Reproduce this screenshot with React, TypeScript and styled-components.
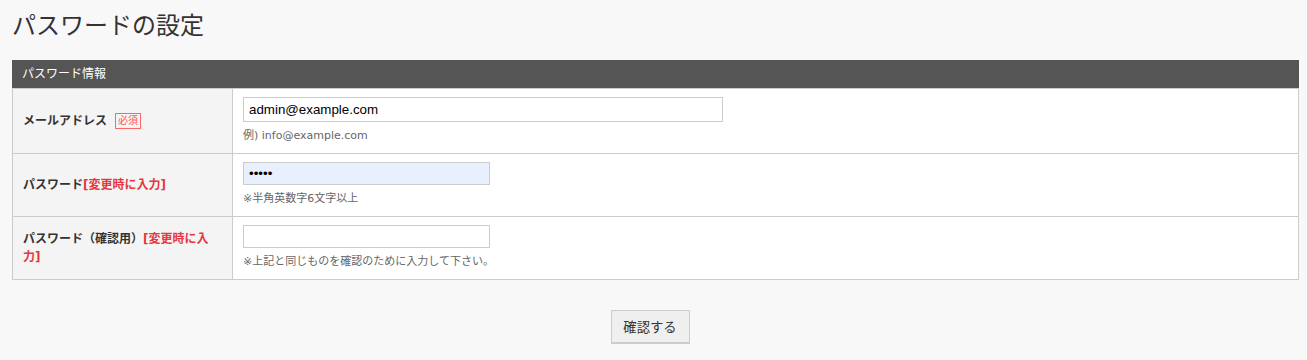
import styled, { createGlobalStyle } from "styled-components"

const GlobalStyle = createGlobalStyle`
  html, body {
    margin: 0;
    padding: 0;
    background: #f8f8f8;
    font-family: "DejaVu Sans", "Noto Sans CJK JP", sans-serif;
    color: #333;
  }
`

const Page = styled.div`
  padding: 0 8px 0 12px;
`

const Title = styled.h1`
  margin: 7px 0 19px;
  font-family: "Noto Sans CJK JP", sans-serif;
  font-size: 24px;
  line-height: 34px;
  font-weight: 400;
  color: #333;
`

const SectionHead = styled.div`
  height: 28px;
  line-height: 28px;
  background: #555;
  color: #fff;
  font-size: 12px;
  padding: 0 10px;
`

const FormBox = styled.div`
  border: 1px solid #ccc;
  background: #fff;
`

const Row = styled.div`
  display: grid;
  grid-template-columns: 220px 1fr;
  & + & {
    border-top: 1px solid #ccc;
  }
`

const Label = styled.div`
  display: flex;
  align-items: center;
  background: #f4f4f4;
  border-right: 1px solid #ccc;
  padding: 0 14px 0 10px;
  font-size: 12px;
  line-height: 18px;
  font-weight: 700;
  color: #333;
`

const LabelText = styled.span``

const Note = styled.span`
  color: #e8383d;
`

const Required = styled.span`
  display: inline-block;
  margin-left: 8px;
  padding: 0 2px;
  height: 14px;
  line-height: 14px;
  border: 1px solid #f66;
  color: #f55;
  font-size: 10px;
  font-weight: 400;
`

const Value = styled.div`
  padding: 8px 10px;
`

const Field = styled.input<{ $w: number; $h: number; $filled?: boolean }>`
  display: block;
  box-sizing: border-box;
  width: ${(p) => p.$w}px;
  height: ${(p) => p.$h}px;
  margin: 0;
  padding: 0 5px;
  border: 1px solid #ccc;
  border-radius: 0;
  background: ${(p) => (p.$filled ? "#e8f0fe" : "#fff")};
  font-family: "Liberation Sans", "Noto Sans CJK JP", sans-serif;
  font-size: 13.333px;
  color: #000;
  outline: none;
`

const Hint = styled.div`
  margin-top: 5px;
  font-size: 11px;
  line-height: 18px;
  color: #666;
`

const ButtonRow = styled.div`
  display: flex;
  justify-content: center;
  padding: 30px 11px 0 0;
`

const Button = styled.button`
  box-sizing: border-box;
  width: 79px;
  height: 34px;
  padding: 0;
  background: #efefef;
  border: 1px solid #ccc;
  border-bottom-width: 2px;
  font-family: "Noto Sans CJK JP", sans-serif;
  font-size: 13.333px;
  color: #333;
  cursor: pointer;
`

export default function App() {
  return (
    <Page>
      <GlobalStyle />
      <Title>パスワードの設定</Title>
      <SectionHead>パスワード情報</SectionHead>
      <FormBox>
        <Row>
          <Label>
            <LabelText>メールアドレス</LabelText>
            <Required>必須</Required>
          </Label>
          <Value>
            <Field $w={480} $h={25} type="text" defaultValue="admin@example.com" />
            <Hint>例) info@example.com</Hint>
          </Value>
        </Row>
        <Row>
          <Label>
            <LabelText>
              パスワード<Note>[変更時に入力]</Note>
            </LabelText>
          </Label>
          <Value>
            <Field $w={247} $h={23} $filled type="password" defaultValue="aaaaa" />
            <Hint>※半角英数字6文字以上</Hint>
          </Value>
        </Row>
        <Row>
          <Label>
            <LabelText>
              パスワード（確認用）<Note>[変更時に入力]</Note>
            </LabelText>
          </Label>
          <Value>
            <Field $w={247} $h={23} type="password" />
            <Hint>※上記と同じものを確認のために入力して下さい。</Hint>
          </Value>
        </Row>
      </FormBox>
      <ButtonRow>
        <Button type="button">確認する</Button>
      </ButtonRow>
    </Page>
  )
}
